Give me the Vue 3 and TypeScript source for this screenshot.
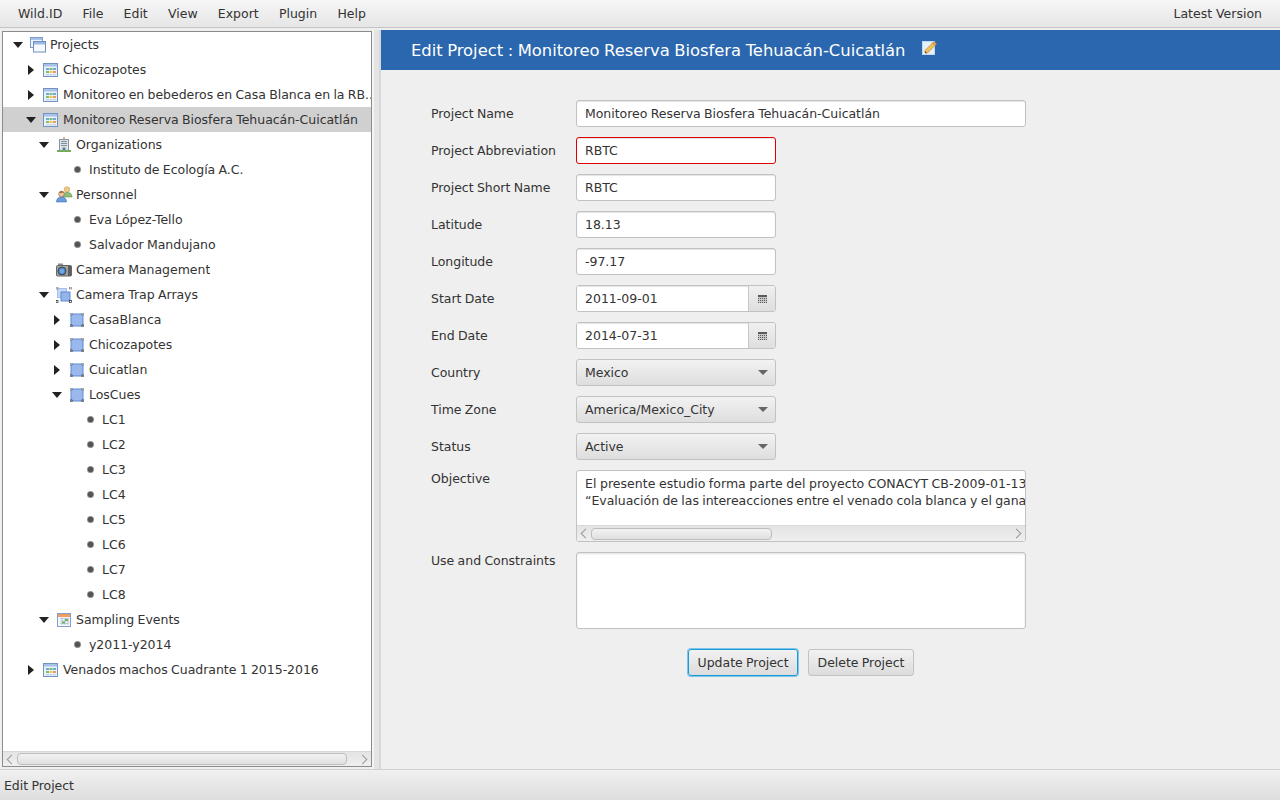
<template>
  <div class="app">
    <div class="menubar">
      <span
        v-for="item in menus"
        :key="item"
        class="menu-item"
      >{{ item }}</span>
      <span class="menu-right">Latest Version</span>
    </div>

    <div class="main">
      <div class="tree-panel">
        <div class="tree">
          <div
            v-for="(row, idx) in treeRows"
            :key="idx"
            class="tree-row"
            :class="{ selected: row.selected }"
            :style="{ paddingLeft: 12 + row.depth * 13 + 'px' }"
          >
            <span class="arrow-slot">
              <span
                v-if="row.arrow"
                :class="row.arrow === 'open' ? 'arrow-open' : 'arrow-closed'"
              />
            </span>
            <span class="icon-slot">
              <span
                v-if="row.icon === 'bullet'"
                class="bullet"
              />
              <svg
                v-else-if="row.icon === 'windows'"
                width="16"
                height="16"
                viewBox="0 0 16 16"
              >
                <rect x="0.5" y="0.5" width="12" height="10" fill="#eef4fc" stroke="#7d9bc8" />
                <rect x="1" y="1" width="11" height="2" fill="#a9c3e8" />
                <rect x="3.5" y="4.5" width="12" height="10.5" fill="#f6f9fe" stroke="#6f8fc0" />
                <rect x="4" y="5" width="11" height="2.5" fill="#9dbae4" />
              </svg>
              <svg
                v-else-if="row.icon === 'table'"
                width="15"
                height="14"
                viewBox="0 0 15 14"
              >
                <rect x="0.5" y="0.5" width="14" height="13" fill="#eaf1fb" stroke="#7393c4" />
                <rect x="1" y="1" width="13" height="2.5" fill="#a8c2e8" />
                <rect x="3" y="5" width="3" height="2" fill="#6aaed8" />
                <rect x="6.5" y="5" width="3" height="2" fill="#7fbf6a" />
                <rect x="10" y="5" width="3" height="2" fill="#6aaed8" />
                <rect x="3" y="8" width="3" height="2" fill="#7fbf6a" />
                <rect x="6.5" y="8" width="3" height="2" fill="#f0c75a" />
                <rect x="10" y="8" width="3" height="2" fill="#ef9f4f" />
                <rect x="3" y="11" width="3" height="1.5" fill="#c9d6ea" />
                <rect x="6.5" y="11" width="3" height="1.5" fill="#c9d6ea" />
                <rect x="10" y="11" width="3" height="1.5" fill="#c9d6ea" />
              </svg>
              <svg
                v-else-if="row.icon === 'building'"
                width="16"
                height="16"
                viewBox="0 0 16 16"
              >
                <rect x="7.5" y="0" width="1" height="2" fill="#c0504d" />
                <rect x="3.5" y="2.5" width="9" height="11" fill="#dfe5ea" stroke="#8a949c" />
                <rect x="5" y="4" width="6" height="1" fill="#7f8d99" />
                <rect x="5" y="6" width="6" height="1" fill="#7f8d99" />
                <rect x="5" y="8" width="6" height="1" fill="#7f8d99" />
                <rect x="6.5" y="10.5" width="3" height="3" fill="#5f7f9f" />
                <rect x="1" y="13" width="14" height="2" fill="#74ab5c" />
              </svg>
              <svg
                v-else-if="row.icon === 'people'"
                width="17"
                height="17"
                viewBox="0 0 17 17"
              >
                <circle cx="11" cy="3.5" r="2.8" fill="#efc98a" stroke="#c79a50" stroke-width="0.6" />
                <path d="M7 11 C7 7.5 8.5 6.5 11 6.5 C14 6.5 16 7.5 16 11 Z" fill="#8cc07a" stroke="#5e9650" stroke-width="0.6" />
                <circle cx="5.5" cy="8" r="2.8" fill="#f0c8a0" stroke="#a8683c" stroke-width="0.7" />
                <path d="M4 5.8 C5 4.8 7 5 8 6.6 L3.2 7 Z" fill="#9a5a30" />
                <path d="M0.5 16 C0.5 12.5 2.5 11 5.5 11 C8.5 11 10.5 12.5 10.5 16 Z" fill="#6a9ddc" stroke="#3f6fb0" stroke-width="0.6" />
              </svg>
              <svg
                v-else-if="row.icon === 'camera'"
                width="16"
                height="14"
                viewBox="0 0 16 14"
              >
                <rect x="2" y="0.5" width="5" height="2.5" fill="#8c8c8c" />
                <rect x="0.5" y="2.5" width="15" height="10.5" rx="1" fill="#a3a3a3" stroke="#666" />
                <rect x="12" y="3" width="3" height="10" fill="#5e5e5e" />
                <circle cx="6" cy="8" r="4" fill="#4a86cc" stroke="#444" />
                <circle cx="6" cy="8" r="2.2" fill="#6fa8e6" />
              </svg>
              <svg
                v-else-if="row.icon === 'arrays'"
                width="16"
                height="16"
                viewBox="0 0 16 16"
              >
                <rect x="1.5" y="1.5" width="9" height="9" fill="#c4d8f6" stroke="#a4bfea" />
                <rect x="5" y="5" width="9" height="9" fill="#94b4ea" stroke="#5f8ad8" />
                <rect x="0" y="0" width="2" height="2" fill="#fff" stroke="#777" stroke-width="0.7" />
                <rect x="13.5" y="0" width="2" height="2" fill="#fff" stroke="#777" stroke-width="0.7" />
                <rect x="0" y="13.5" width="2" height="2" fill="#fff" stroke="#222" stroke-width="0.7" />
                <rect x="13.5" y="13.5" width="2" height="2" fill="#fff" stroke="#222" stroke-width="0.7" />
              </svg>
              <svg
                v-else-if="row.icon === 'array'"
                class="array-icon"
                width="14"
                height="14"
                viewBox="0 0 14 14"
              >
                <rect x="1" y="1" width="12" height="12" fill="#9ab8ec" stroke="#5c8ad8" />
                <rect x="0" y="0" width="2" height="2" fill="#fff" stroke="#666" stroke-width="0.7" />
                <rect x="12" y="0" width="2" height="2" fill="#fff" stroke="#666" stroke-width="0.7" />
                <rect x="0" y="12" width="2" height="2" fill="#fff" stroke="#222" stroke-width="0.7" />
                <rect x="12" y="12" width="2" height="2" fill="#fff" stroke="#222" stroke-width="0.7" />
              </svg>
              <svg
                v-else-if="row.icon === 'calendar'"
                class="array-icon"
                width="14"
                height="14"
                viewBox="0 0 14 14"
              >
                <rect x="0.5" y="0.5" width="13" height="13" fill="#f3f6fb" stroke="#7fa0d0" />
                <rect x="1" y="1" width="12" height="3" fill="#ef9f5f" />
                <path d="M3 5.5 H12 M3 8 H12 M3 10.5 H12 M5 5 V12 M8 5 V12 M11 5 V12" stroke="#b4c2d4" stroke-width="0.8" />
                <rect x="8" y="6" width="3" height="2" fill="#6fb35e" />
                <rect x="5" y="8.5" width="3" height="2" fill="#6fb35e" />
              </svg>
            </span>
            <span class="tree-label">{{ row.label }}</span>
          </div>
        </div>
        <div class="hscroll tree-scroll">
          <span class="chev chev-left" />
          <span class="thumb tree-thumb" />
          <span class="chev chev-right" />
        </div>
      </div>

      <div class="splitter" />

      <div class="content">
        <div class="title-bar">
          <span>Edit Project : {{ form.name }}</span>
          <svg
            class="edit-icon"
            width="16"
            height="16"
            viewBox="0 0 16 16"
          >
            <rect x="0.5" y="1.5" width="12" height="13" fill="#e6f0fb" stroke="#c3d7ef" />
            <path d="M3 10.5 L10.5 3 L13 5.5 L5.5 13 L3 13 Z" fill="#efc35a" stroke="#b98a2e" stroke-width="0.7" />
            <path d="M10.5 3 L12 1.5 L14.5 4 L13 5.5 Z" fill="#e8a35a" stroke="#b98a2e" stroke-width="0.6" />
            <path d="M3 11 L3 13 L5 13 Z" fill="#444" />
          </svg>
        </div>

        <div class="form">
          <div class="form-row">
            <label>Project Name</label>
            <input v-model="form.name" class="field wide">
          </div>
          <div class="form-row">
            <label>Project Abbreviation</label>
            <input v-model="form.abbreviation" class="field narrow invalid">
          </div>
          <div class="form-row">
            <label>Project Short Name</label>
            <input v-model="form.shortName" class="field narrow">
          </div>
          <div class="form-row">
            <label>Latitude</label>
            <input v-model="form.latitude" class="field narrow">
          </div>
          <div class="form-row">
            <label>Longitude</label>
            <input v-model="form.longitude" class="field narrow">
          </div>
          <div
            v-for="d in dates"
            :key="d.label"
            class="form-row"
          >
            <label>{{ d.label }}</label>
            <div class="date-picker narrow">
              <input v-model="d.value" class="date-input">
              <span class="date-btn">
                <svg width="9" height="8" viewBox="0 0 9 8" shape-rendering="crispEdges">
                  <rect width="9" height="8" fill="#5a5a5a" />
                  <path d="M0 2.5 H9 M0 4.5 H9 M0 6.5 H9 M1.5 2 V8 M3.5 2 V8 M5.5 2 V8 M7.5 2 V8" stroke="#c8c8c8" stroke-width="1" />
                </svg>
              </span>
            </div>
          </div>
          <div
            v-for="s in selects"
            :key="s.label"
            class="form-row"
          >
            <label>{{ s.label }}</label>
            <div class="select narrow">
              <span>{{ s.value }}</span>
              <span class="select-arrow" />
            </div>
          </div>
          <div class="form-row top">
            <label>Objective</label>
            <div class="text-area objective">
              <div class="text-lines">
                <div class="line-first">El presente estudio forma parte del proyecto CONACYT CB-2009-01-13</div>
                <div>“Evaluación de las intereacciones entre el venado cola blanca y el ganado</div>
              </div>
              <div class="hscroll area-scroll">
                <span class="chev chev-left" />
                <span class="thumb area-thumb" />
                <span class="chev chev-right" />
              </div>
            </div>
          </div>
          <div class="form-row top">
            <label>Use and Constraints</label>
            <div class="text-area constraints" />
          </div>
          <div class="actions">
            <button class="btn focused">Update Project</button>
            <button class="btn">Delete Project</button>
          </div>
        </div>
      </div>
    </div>

    <div class="statusbar">Edit Project</div>
  </div>
</template>

<script setup lang="ts">
import { reactive } from 'vue';

interface TreeRow {
  depth: number;
  label: string;
  icon: string;
  arrow?: 'open' | 'closed';
  selected?: boolean;
}

const menus = ['Wild.ID', 'File', 'Edit', 'View', 'Export', 'Plugin', 'Help'];

const form = reactive({
  name: 'Monitoreo Reserva Biosfera Tehuacán-Cuicatlán',
  abbreviation: 'RBTC',
  shortName: 'RBTC',
  latitude: '18.13',
  longitude: '-97.17',
});

const dates = reactive([
  { label: 'Start Date', value: '2011-09-01' },
  { label: 'End Date', value: '2014-07-31' },
]);

const selects = [
  { label: 'Country', value: 'Mexico' },
  { label: 'Time Zone', value: 'America/Mexico_City' },
  { label: 'Status', value: 'Active' },
];

const lcRows: TreeRow[] = ['LC1', 'LC2', 'LC3', 'LC4', 'LC5', 'LC6', 'LC7', 'LC8'].map((label) => ({
  depth: 4,
  label,
  icon: 'bullet',
}));

const treeRows: TreeRow[] = [
  { depth: 0, label: 'Projects', icon: 'windows', arrow: 'open' },
  { depth: 1, label: 'Chicozapotes', icon: 'table', arrow: 'closed' },
  { depth: 1, label: 'Monitoreo en bebederos en Casa Blanca en la RB..', icon: 'table', arrow: 'closed' },
  { depth: 1, label: 'Monitoreo Reserva Biosfera Tehuacán-Cuicatlán', icon: 'table', arrow: 'open', selected: true },
  { depth: 2, label: 'Organizations', icon: 'building', arrow: 'open' },
  { depth: 3, label: 'Instituto de Ecología A.C.', icon: 'bullet' },
  { depth: 2, label: 'Personnel', icon: 'people', arrow: 'open' },
  { depth: 3, label: 'Eva López-Tello', icon: 'bullet' },
  { depth: 3, label: 'Salvador Mandujano', icon: 'bullet' },
  { depth: 2, label: 'Camera Management', icon: 'camera' },
  { depth: 2, label: 'Camera Trap Arrays', icon: 'arrays', arrow: 'open' },
  { depth: 3, label: 'CasaBlanca', icon: 'array', arrow: 'closed' },
  { depth: 3, label: 'Chicozapotes', icon: 'array', arrow: 'closed' },
  { depth: 3, label: 'Cuicatlan', icon: 'array', arrow: 'closed' },
  { depth: 3, label: 'LosCues', icon: 'array', arrow: 'open' },
  ...lcRows,
  { depth: 2, label: 'Sampling Events', icon: 'calendar', arrow: 'open' },
  { depth: 3, label: 'y2011-y2014', icon: 'bullet' },
  { depth: 1, label: 'Venados machos Cuadrante 1 2015-2016', icon: 'table', arrow: 'closed' },
];
</script>

<style scoped>
.app {
  width: 1280px;
  height: 800px;
  display: flex;
  flex-direction: column;
  background: #efefef;
  color: #333;
  font-family: "DejaVu Sans", sans-serif;
  font-size: 12.5px;
  letter-spacing: -0.03px;
  word-spacing: -0.6px;
  overflow: hidden;
}

.menubar {
  height: 28px;
  flex-shrink: 0;
  box-sizing: border-box;
  display: flex;
  align-items: center;
  gap: 20.2px;
  padding: 0 18px;
  letter-spacing: 0;
  word-spacing: 0;
  background: linear-gradient(#f6f6f6, #e6e6e6);
  border-bottom: 1px solid #c4c4c4;
}

.menu-right {
  margin-left: auto;
}

.main {
  flex: 1;
  display: flex;
  min-height: 0;
  padding-top: 2px;
}

.tree-panel {
  width: 370px;
  margin: 1px 0 2px 2px;
  box-sizing: border-box;
  border: 1px solid #8c8c8c;
  background: #fff;
  display: flex;
  flex-direction: column;
}

.tree {
  flex: 1;
  min-height: 0;
  overflow: hidden;
}

.tree-row {
  height: 25px;
  display: flex;
  align-items: center;
  box-sizing: border-box;
  white-space: nowrap;
  margin-left: -3px;
}

.tree-row.selected {
  background: #d0d0d0;
}

.arrow-slot {
  width: 18px;
  flex-shrink: 0;
  display: flex;
  align-items: center;
}

.arrow-open {
  width: 0;
  height: 0;
  border-left: 5px solid transparent;
  border-right: 5px solid transparent;
  border-top: 6px solid #222;
  margin-left: 1px;
}

.arrow-closed {
  width: 0;
  height: 0;
  border-top: 5px solid transparent;
  border-bottom: 5px solid transparent;
  border-left: 6px solid #222;
  margin-left: 3px;
}

.icon-slot {
  width: 20px;
  flex-shrink: 0;
  display: flex;
  align-items: center;
}

.array-icon {
  margin-left: 1px;
}

.bullet {
  width: 7px;
  height: 7px;
  margin-left: 5px;
  border-radius: 50%;
  background: radial-gradient(#555 45%, #8a8a8a 60%, #b4b4b4);
}

.tree-label {
  overflow: hidden;
}

.hscroll {
  position: relative;
  display: flex;
  align-items: center;
  background: linear-gradient(#e4e4e4, #efefef);
  border-top: 1px solid #d8d8d8;
  box-sizing: border-box;
}

.tree-scroll {
  height: 15px;
  flex-shrink: 0;
}

.thumb {
  display: block;
  height: 12px;
  box-sizing: border-box;
  border: 1px solid #bdbdbd;
  border-radius: 4px;
  background: linear-gradient(#f2f2f2, #e0e0e0);
}

.tree-thumb {
  width: 330px;
  margin-left: 2px;
}

.chev {
  width: 7px;
  height: 7px;
  flex-shrink: 0;
  box-sizing: border-box;
  border-top: 1px solid #9a9a9a;
  border-left: 1px solid #9a9a9a;
}

.chev-left {
  transform: rotate(-45deg);
  margin-left: 5px;
}

.chev-right {
  transform: rotate(135deg);
  margin-left: auto;
  margin-right: 5px;
}

.splitter {
  width: 9px;
  flex-shrink: 0;
  background: linear-gradient(90deg, #f4f4f4 0 2px, #e4e4e4 2px 7px, #d8d8d8 7px);
}

.content {
  flex: 1;
  min-width: 0;
}

.title-bar {
  height: 40px;
  display: flex;
  align-items: center;
  gap: 17px;
  padding-left: 30px;
  box-sizing: border-box;
  background: #2a67ae;
  color: #fff;
  font-size: 16.4px;
}

.edit-icon {
  margin-top: -5px;
}

.form {
  padding: 30px 0 0 50px;
  display: flex;
  flex-direction: column;
  gap: 10px;
}

.form-row {
  display: flex;
  align-items: center;
}

.form-row.top {
  align-items: flex-start;
}

.form-row.top label {
  margin-top: 1px;
}

label {
  width: 145px;
  flex-shrink: 0;
}

.field,
.date-picker,
.select,
.text-area {
  box-sizing: border-box;
  border: 1px solid #c2c2c2;
  border-radius: 3px;
}

.field {
  display: block;
  height: 27px;
  padding: 0 8px;
  background: #fff;
  font: inherit;
  color: inherit;
  letter-spacing: inherit;
  word-spacing: inherit;
  outline: none;
  box-shadow: inset 0 1px 1px #e4e4e4;
}

.wide {
  width: 450px;
}

.narrow {
  width: 200px;
}

.invalid {
  border-color: #e00000;
}

.date-picker {
  height: 27px;
  display: flex;
  overflow: hidden;
  background: #fff;
}

.date-input {
  flex: 1;
  min-width: 0;
  border: none;
  outline: none;
  padding: 0 8px;
  font: inherit;
  color: inherit;
  box-shadow: inset 0 1px 1px #e4e4e4;
}

.date-btn {
  width: 27px;
  box-sizing: border-box;
  display: flex;
  align-items: center;
  justify-content: center;
  border-left: 1px solid #c8c8c8;
  background: linear-gradient(#f0f0f0, #dedede);
}

.select {
  height: 27px;
  display: flex;
  align-items: center;
  justify-content: space-between;
  padding: 0 8px;
  background: linear-gradient(#f2f2f2, #dedede);
}

.select-arrow {
  width: 0;
  height: 0;
  border-left: 5px solid transparent;
  border-right: 5px solid transparent;
  border-top: 5px solid #666;
  margin-right: -1px;
}

.text-area {
  width: 450px;
  background: #fff;
  overflow: hidden;
}

.objective {
  height: 72px;
  display: flex;
  flex-direction: column;
}

.text-lines {
  flex: 1;
  padding: 4px 8px 0;
  white-space: nowrap;
  overflow: hidden;
  line-height: 17px;
}

.line-first {
  letter-spacing: 0.05px;
}

.area-scroll {
  height: 16px;
  flex-shrink: 0;
}

.area-thumb {
  width: 181px;
  margin-left: 2px;
}

.constraints {
  height: 77px;
  box-shadow: inset 0 1px 2px #e0e0e0;
}

.actions {
  width: 450px;
  margin: 10px 0 0 145px;
  display: flex;
  justify-content: center;
  gap: 10px;
}

.btn {
  height: 27px;
  padding: 0 8.5px;
  box-sizing: border-box;
  border: 1px solid #c2c2c2;
  border-radius: 3px;
  background: linear-gradient(#f2f2f2, #dcdcdc);
  font: inherit;
  color: inherit;
  letter-spacing: inherit;
  word-spacing: inherit;
}

.btn.focused {
  border-color: #1b9bd8;
  box-shadow: 0 0 0 1px #7fc4e8;
}

.statusbar {
  height: 31px;
  flex-shrink: 0;
  box-sizing: border-box;
  display: flex;
  align-items: center;
  padding-left: 4px;
  border-top: 1px solid #d0d0d0;
  background: linear-gradient(#f0f0f0, #dedede);
}
</style>
